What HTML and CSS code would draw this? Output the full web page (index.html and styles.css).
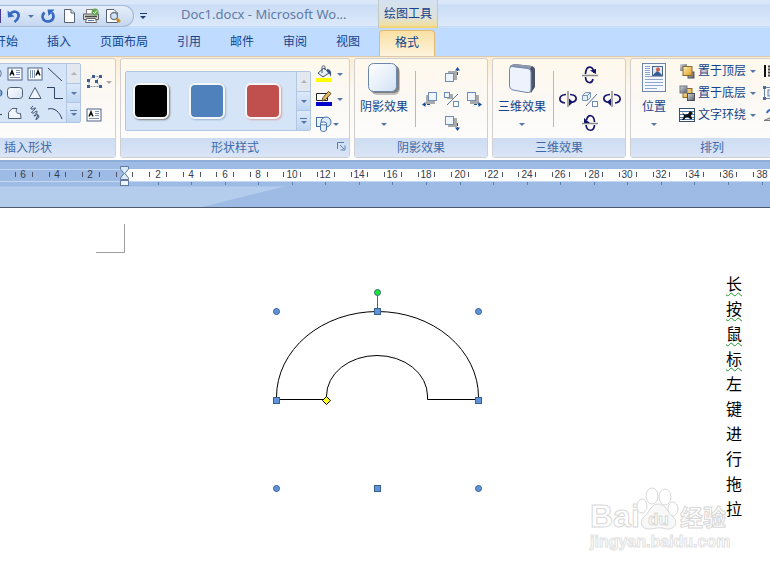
FILE: index.html
```html
<!DOCTYPE html>
<html lang="zh-CN">
<head>
    <meta charset="UTF-8">
    <meta name="viewport" content="width=device-width, initial-scale=1.0">
    <title>Doc1.docx - Microsoft Word</title>
    <link rel="stylesheet" href="styles.css">
</head>
<body>
    <!-- Shared icons -->
    <svg class="defs" width="0" height="0" aria-hidden="true">
        <defs>
            <linearGradient id="paper" x1="0" y1="0" x2="1" y2="1">
                <stop offset="0" stop-color="#ffffff"/>
                <stop offset="1" stop-color="#d3e2f6"/>
            </linearGradient>
            <linearGradient id="gold" x1="0" y1="0" x2="1" y2="1">
                <stop offset="0" stop-color="#fff0b8"/>
                <stop offset="1" stop-color="#dd9b1e"/>
            </linearGradient>
            <linearGradient id="steel" x1="0" y1="0" x2="1" y2="1">
                <stop offset="0" stop-color="#d8dbe2"/>
                <stop offset="1" stop-color="#52565f"/>
            </linearGradient>
            <symbol id="textbox" viewBox="0 0 16 14">
                <rect x="1" y="1" width="14" height="12" fill="#fff" stroke="#4d6488"/>
                <path d="M3 8.500L5 3.500L7 8.500M4 6.500H6" fill="none" stroke="#111" stroke-width="1.300"/>
                <path d="M9 3.500H13M9 5.500H13M9 7.500H13M3 10.500H13" stroke="#7f93b5"/>
            </symbol>
            <symbol id="rotate" viewBox="0 0 18 18">
                <path d="M9 1V17" stroke="#8b8b8b" stroke-width="1.500"/>
                <path d="M7 4.500C-1 5 -1 12 6 13M11 4.500C19 5 19 11.500 12 12.500" fill="none" stroke="#15156b" stroke-width="1.700"/>
                <path d="M10 8.500L14 12L10 16Z" fill="#15156b"/>
            </symbol>
        </defs>
    </svg>

    <header>
        <div class="title-bar">
            <div class="quick-access">
                <button class="save" aria-label="保存"></button>
                <button aria-label="撤消"><svg width="16" height="16" viewBox="0 0 16 16"><path d="M4 6C8 1.500 13.500 4 12.500 8.500C12 11 10.500 12.500 8.500 14" fill="none" stroke="#3568c0" stroke-width="2.600"/><path d="M1.500 2.500L2 9.500L8.500 8.500Z" fill="#3568c0"/></svg></button>
                <button class="drop" aria-label="撤消列表"><i class="arrow"></i></button>
                <button aria-label="重复"><svg width="16" height="16" viewBox="0 0 16 16"><path d="M4.500 4.500C0.500 8.500 3 13.500 8 13.500C13.500 13.500 15 8 12 4.500" fill="none" stroke="#3568c0" stroke-width="2.500"/><path d="M7.500 1.500H14.500L8.500 8Z" fill="#3568c0"/></svg></button>
                <button aria-label="新建"><svg width="16" height="16" viewBox="0 0 16 16"><path d="M3.500 1.500H10L13.500 5V14.500H3.500Z" fill="#fff" stroke="#566278"/><path d="M10 1.500V5H13.500" fill="#dde4ee" stroke="#566278"/></svg></button>
                <button aria-label="快速打印"><svg width="18" height="16" viewBox="0 0 18 16"><path d="M4.500 6V1.500H12V6" fill="#fff" stroke="#777"/><path d="M1.500 6H16.500V11.500H1.500Z" fill="#d5d5d0" stroke="#5c5c5c"/><path d="M3 8.500H15" stroke="#444" stroke-width="1.500"/><path d="M4.500 10.500H13.500L14.500 14.500H3.500Z" fill="#fff" stroke="#666"/><path d="M6 12.500H12" stroke="#4b79c0"/><circle cx="13" cy="4" r="3.500" fill="#63a653"/><path d="M11 4L12.500 5.500L15 2.500" fill="none" stroke="#fff"/></svg></button>
                <button aria-label="打印预览"><svg width="16" height="16" viewBox="0 0 16 16"><path d="M1.500 1.500H9L12.500 5V14.500H1.500Z" fill="#fff" stroke="#566278"/><circle cx="9" cy="8" r="3.500" fill="#cfe4f8" stroke="#6e7887" stroke-width="1.300"/><path d="M11.500 10.500L15 14" stroke="#c99227" stroke-width="2.600"/></svg></button>
            </div>
            <button class="customize" aria-label="自定义快速访问工具栏"><i class="bar"></i><i class="arrow"></i></button>
            <h1>Doc1.docx - Microsoft Wo...</h1>
            <div class="context-title">绘图工具</div>
        </div>
        <nav>
            <a href="#">开始</a>
            <a href="#">插入</a>
            <a href="#">页面布局</a>
            <a href="#">引用</a>
            <a href="#">邮件</a>
            <a href="#">审阅</a>
            <a href="#">视图</a>
            <a href="#" class="active">格式</a>
        </nav>
    </header>

    <main>
        <div class="ribbon">
            <!-- Insert shapes -->
            <section class="group shapes">
                <div class="group-body">
                    <div class="gallery">
                        <div class="shape-grid">
                            <button aria-label="最近使用"><svg width="16" height="16" viewBox="0 0 16 16"><path d="M8 2C16 2 16 13 8 13" fill="#fff" stroke="#3d5a80"/></svg></button>
                            <button aria-label="文本框"><svg width="16" height="14"><use href="#textbox"/></svg></button>
                            <button aria-label="竖排文本框"><svg width="16" height="14" viewBox="0 0 16 14"><rect x="1" y="1" width="14" height="12" fill="#fff" stroke="#4d6488"/><path d="M3.500 3V11M5.500 3V11M7.500 3V11" stroke="#7f93b5"/><path d="M9 8.500L11 3.500L13 8.500M10 6.500H12" fill="none" stroke="#111" stroke-width="1.300"/></svg></button>
                            <button aria-label="直线"><svg width="16" height="16" viewBox="0 0 16 16"><path d="M1 2L15 15" stroke="#2c4262"/></svg></button>
                            <button aria-label="椭圆"><svg width="16" height="16" viewBox="0 0 16 16"><ellipse cx="8" cy="8" rx="7" ry="5" fill="#82a8d8" stroke="#2c5590"/></svg></button>
                            <button aria-label="圆角矩形"><svg width="16" height="16" viewBox="0 0 16 16"><rect x="0.500" y="2.500" width="15" height="11" rx="3" fill="url(#paper)" stroke="#4c5c70"/></svg></button>
                            <button aria-label="三角形"><svg width="16" height="16" viewBox="0 0 16 16"><path d="M8 2.500L14 13.500H2Z" fill="#eff5fc" stroke="#4c5c70"/></svg></button>
                            <button aria-label="肘形连接符"><svg width="16" height="16" viewBox="0 0 16 16"><path d="M0 2.500H7.500V13.500H16" fill="none" stroke="#2c4262"/></svg></button>
                            <button aria-label="箭头"><svg width="16" height="16" viewBox="0 0 16 16"><path d="M1 9.500H15" stroke="#2c4262"/></svg></button>
                            <button aria-label="任意多边形"><svg width="16" height="16" viewBox="0 0 16 16"><path d="M1.500 13.500V7.500L5 3.500H10C8 7 10 9 13.500 8.500L14 13.500Z" fill="#eff5fc" stroke="#4c5c70"/></svg></button>
                            <button aria-label="自由曲线"><svg width="16" height="16" viewBox="0 0 16 16"><path d="M6 1C2 4 4 5 8 3C11 3 3 7 5 8C7 9 10 4 10 7C10 9 5 11 8 11C11 8 12 9 9 14C8 16 14 12 11 10" fill="none" stroke="#2c4262"/></svg></button>
                            <button aria-label="弧线"><svg width="16" height="16" viewBox="0 0 16 16"><path d="M1 4C8 2 13 8 15 14" fill="none" stroke="#2c4262"/></svg></button>
                        </div>
                        <div class="scroller">
                            <button disabled aria-label="上一行"><i class="arrow up"></i></button>
                            <button aria-label="下一行"><i class="arrow"></i></button>
                            <button aria-label="其他"><i class="bar"></i><i class="arrow"></i></button>
                        </div>
                    </div>
                    <div class="shape-tools">
                        <button aria-label="编辑形状"><svg width="18" height="16" viewBox="0 0 18 16"><path d="M3 12.500V6.500L7 2.500H14L10 7L14 12.500Z" fill="none" stroke="#8096b8" stroke-dasharray="2 1"/><path d="M1 5h3v3h-3zM1 11h3v3h-3zM6 1h3v3h-3zM13 1h3v3h-3zM9 6h3v3h-3zM13 11h3v3h-3z" fill="#3f5f91"/></svg><i class="arrow grey"></i></button>
                        <button aria-label="编辑文字"><svg width="16" height="14"><use href="#textbox"/></svg></button>
                    </div>
                </div>
                <h2>插入形状</h2>
            </section>

            <!-- Shape styles -->
            <section class="group styles">
                <div class="group-body">
                    <div class="gallery">
                        <div class="swatches">
                            <button class="swatch black" aria-label="黑色"></button>
                            <button class="swatch blue" aria-label="蓝色"></button>
                            <button class="swatch red" aria-label="红色"></button>
                        </div>
                        <div class="scroller">
                            <button disabled aria-label="上一行"><i class="arrow up"></i></button>
                            <button aria-label="下一行"><i class="arrow"></i></button>
                            <button aria-label="其他"><i class="bar"></i><i class="arrow"></i></button>
                        </div>
                    </div>
                    <div class="style-tools">
                        <button aria-label="形状填充"><svg width="18" height="18" viewBox="0 0 18 18"><path d="M3 8L9 3L14 8L8 12Z" fill="url(#paper)" stroke="#3f526e"/><path d="M7 8V2.500C7 0 10 0 10 2.500V5" fill="none" stroke="#3f526e"/><path d="M12 4C16 4 17 8 15.500 12C15 9 14 8 12 7Z" fill="#33547f"/><rect x="1" y="13" width="16" height="4" fill="#ffff00"/></svg><i class="arrow"></i></button>
                        <button aria-label="形状轮廓"><svg width="18" height="18" viewBox="0 0 18 18"><path d="M1.500 3.500H12.500V10.500H1.500Z" fill="#fff" stroke="#222"/><path d="M7 11L8 7.500L13.500 1.500L16 3.500L10.500 9.500Z" fill="#e5bc69" stroke="#60451c"/><rect x="1" y="12" width="16" height="4" fill="#0000c8"/></svg><i class="arrow"></i></button>
                        <button aria-label="更改形状"><svg width="17" height="18" viewBox="0 0 17 18"><rect x="1.500" y="2.500" width="8" height="9" fill="url(#paper)" stroke="#4270ac"/><circle cx="11" cy="7" r="5" fill="#dbe9fa" stroke="#4270ac"/><path d="M5.500 8.500H11.500V15C10.500 17 6.500 17 5.500 15Z" fill="url(#paper)" stroke="#4270ac"/><ellipse cx="8.500" cy="8.500" rx="3" ry="1.500" fill="#fff" stroke="#4270ac"/></svg><i class="arrow"></i></button>
                    </div>
                </div>
                <h2>形状样式</h2>
                <button class="launcher" aria-label="设置形状格式"><svg width="9" height="9" viewBox="0 0 9 9"><path d="M0.500 7V0.500H7M3 3L7 7M8 3.500V8H3.500" fill="none" stroke="#5d7fae"/></svg></button>
            </section>

            <!-- Shadow effects -->
            <section class="group effects">
                <div class="group-body">
                    <button class="big">
                        <svg width="34" height="34" viewBox="0 0 34 34"><rect x="4" y="4" width="29" height="29" rx="6" fill="#777" opacity="0.450"/><rect x="3" y="3" width="29" height="28" rx="5" fill="#555" opacity="0.600"/><rect x="1.500" y="1.500" width="28" height="28" rx="5" fill="url(#paper)" stroke="#6b87ac"/></svg>
                        <span>阴影效果</span><i class="arrow"></i>
                    </button>
                    <div class="nudge">
                        <button class="n" aria-label="上移阴影"><svg width="18" height="18" viewBox="0 0 18 18"><rect x="5" y="5" width="9" height="9" fill="#aaa"/><rect x="2.500" y="7.500" width="8" height="8" fill="#eef5ff" stroke="#6d8db8"/><path d="M14.500 9V3" stroke="#174fa0" stroke-dasharray="3 1"/><path d="M12 4.500H17L14.500 1Z" fill="#174fa0"/></svg></button>
                        <button class="w" aria-label="左移阴影"><svg width="18" height="18" viewBox="0 0 18 18"><rect x="5" y="5" width="9" height="9" fill="#aaa"/><rect x="7.500" y="2.500" width="8" height="8" fill="#eef5ff" stroke="#6d8db8"/><path d="M9 14.500H3" stroke="#174fa0" stroke-dasharray="3 1"/><path d="M4.500 12V17L1 14.500Z" fill="#174fa0"/></svg></button>
                        <button class="c" aria-label="设置阴影"><svg width="18" height="18" viewBox="0 0 18 18"><rect x="4" y="4" width="6" height="5" fill="#aaa"/><rect x="1.500" y="2.500" width="5" height="5" fill="#eef5ff" stroke="#6d8db8"/><path d="M15 4L4 15" stroke="#55779d"/><rect x="10.500" y="11.500" width="5" height="5" fill="#fff" stroke="#6d8db8"/></svg></button>
                        <button class="e" aria-label="右移阴影"><svg width="18" height="18" viewBox="0 0 18 18"><rect x="5" y="5" width="9" height="9" fill="#aaa"/><rect x="2.500" y="2.500" width="8" height="8" fill="#eef5ff" stroke="#6d8db8"/><path d="M9 14.500H15" stroke="#174fa0" stroke-dasharray="3 1"/><path d="M13.500 12V17L17 14.500Z" fill="#174fa0"/></svg></button>
                        <button class="s" aria-label="下移阴影"><svg width="18" height="18" viewBox="0 0 18 18"><rect x="5" y="4" width="9" height="9" fill="#aaa"/><rect x="2.500" y="2.500" width="8" height="8" fill="#eef5ff" stroke="#6d8db8"/><path d="M14.500 9V15" stroke="#174fa0" stroke-dasharray="3 1"/><path d="M12 13.500H17L14.500 17Z" fill="#174fa0"/></svg></button>
                    </div>
                </div>
                <h2>阴影效果</h2>
            </section>

            <!-- 3-D effects -->
            <section class="group effects">
                <div class="group-body">
                    <button class="big">
                        <svg width="34" height="34" viewBox="0 0 34 34"><path d="M5 4L9 2L27 4Q30 5 30 8V25L26 31Z" fill="#4b5468"/><path d="M5 4L9 2L27 4L25 7Z" fill="#8d98ad"/><path d="M7 4.500L23 6.500Q26 7 26 10V27Q26 31 22 30.500L8 28Q4.500 27 4.500 24V7.500Q4.500 4 7 4.500Z" fill="#edf2fd" stroke="#7186ab"/></svg>
                        <span>三维效果</span><i class="arrow"></i>
                    </button>
                    <div class="nudge">
                        <button class="n" aria-label="上翘"><svg width="18" height="18" viewBox="0 0 18 18"><path d="M1 9.500H17" stroke="#8b8b8b" stroke-width="1.500"/><path d="M13 7C12 -1 5 -1 4.500 8M4.500 11C5 18 11 18 12 13" fill="none" stroke="#15156b" stroke-width="1.700"/><path d="M9 4.500L15 3V8Z" fill="#15156b"/></svg></button>
                        <button class="w" aria-label="左偏"><svg width="18" height="18"><use href="#rotate"/></svg></button>
                        <button class="c" aria-label="三维开关"><svg width="18" height="18" viewBox="0 0 18 18"><path d="M1.500 5.500L4.500 2.500H9.500V7.500L6.500 10.500H1.500ZM1.500 5.500H6.500V10.500M6.500 5.500L9.500 2.500" fill="#e3effb" stroke="#7896bc"/><path d="M16 4L5 16" stroke="#55779d"/><rect x="11.500" y="11.500" width="5" height="5" fill="#fff" stroke="#6d8db8"/></svg></button>
                        <button class="e" aria-label="右偏"><svg width="18" height="18" viewBox="0 0 18 18"><g transform="matrix(-1 0 0 1 18 0)"><use href="#rotate"/></g></svg></button>
                        <button class="s" aria-label="下俯"><svg width="18" height="18" viewBox="0 0 18 18"><path d="M1 9.500H17" stroke="#8b8b8b" stroke-width="1.500"/><path d="M13.500 8C13 0 7 0 5.500 6M5 11C6 18 13 18 13.500 11" fill="none" stroke="#15156b" stroke-width="1.700"/><path d="M3 4V9H9Z" fill="#15156b"/></svg></button>
                    </div>
                </div>
                <h2>三维效果</h2>
            </section>

            <!-- Arrange -->
            <section class="group arrange">
                <div class="group-body">
                    <button class="big">
                        <svg width="34" height="34" viewBox="0 0 34 34"><rect x="5.500" y="1.500" width="23" height="28" fill="#f5f9ff" stroke="#7086a8"/><path d="M8 4.500H13M8 6.500H13M8 8.500H13M8 10.500H13M8 12.500H13M8 14.500H26M8 17.500H26M8 20.500H26M8 23.500H26M8 26.500H20" stroke="#8ea6cb"/><rect x="15.500" y="4.500" width="10" height="9" fill="#dce8fb" stroke="#48658f"/><path d="M16 13L20 9L22 10L25 13Z" fill="#375b91"/><circle cx="21" cy="7.500" r="2" fill="#d05a3b"/></svg>
                        <span>位置</span><i class="arrow"></i>
                    </button>
                    <div class="rows">
                        <button><svg width="16" height="16" viewBox="0 0 16 16"><rect x="1" y="1" width="7" height="7" fill="url(#steel)"/><rect x="9" y="9" width="6" height="6" fill="url(#steel)" stroke="#4e525a"/><rect x="4" y="3.500" width="9" height="9" fill="url(#gold)" stroke="#876a2c"/></svg>置于顶层<i class="arrow"></i></button>
                        <button><svg width="16" height="16" viewBox="0 0 16 16"><rect x="4" y="3.500" width="9" height="9" fill="url(#gold)" stroke="#876a2c"/><rect x="1" y="1" width="7" height="7" fill="url(#steel)" stroke="#747982"/><rect x="8.500" y="8.500" width="7" height="7" fill="url(#steel)" stroke="#4e525a"/></svg>置于底层<i class="arrow"></i></button>
                        <button><svg width="16" height="16" viewBox="0 0 16 16"><rect x="0.500" y="1.500" width="15" height="13" fill="#fff" stroke="#35516f"/><path d="M1 4.500H15M1 7.500H15M1 10.500H15M1 12.500H15" stroke="#4e76aa"/><path d="M3 5L6 8L9 7L11 4L14 6L12 8L13 12H11L9 10L7 10L5 13H3L5 9Z" fill="#111"/></svg>文字环绕<i class="arrow"></i></button>
                    </div>
                    <div class="rows extra">
                        <button aria-label="对齐"><svg width="16" height="16" viewBox="0 0 16 16"><path d="M2 2V14" stroke="#111" stroke-width="2"/><path d="M5 3.500H12M5 6.500H9M5 9.500H13M5 12.500H10" stroke="#444" stroke-width="2"/></svg></button>
                        <button aria-label="组合"><svg width="16" height="16" viewBox="0 0 16 16"><rect x="1.500" y="2.500" width="12" height="11" fill="none" stroke="#6683ad"/><rect x="5" y="5" width="7" height="6" fill="#dce8f8" stroke="#6683ad"/><path d="M0 1h3v3h-3zM0 12h3v3h-3z" fill="#526d93"/></svg></button>
                        <button aria-label="旋转"><svg width="16" height="16" viewBox="0 0 16 16"><path d="M1 13.500L13 8V13.500Z" fill="#ccc" stroke="#777"/><path d="M4 6C5 2 10 2 11 5" fill="none" stroke="#3568c0" stroke-width="2"/></svg></button>
                    </div>
                </div>
                <h2>排列</h2>
            </section>
        </div>

        <div class="ruler-area">
            <svg id="ruler" class="ruler" width="100%" height="24">
                <rect x="124" y="5" width="100%" height="12" fill="#fff"/>
                <path d="M0 5.500H124M0 17.500H3000" stroke="#c5d9f3"/>
                <g id="marks"></g>
                <path d="M120.500 2.500H128.500V5L125 9.500L128.500 14V15.500H120.500V14L124 9.500L120.500 5Z" fill="#dceafa" stroke="#5f7a9c"/>
                <rect x="120.500" y="16.500" width="8" height="5" fill="#eef5fd" stroke="#5f7a9c"/>
            </svg>
        </div>

        <div class="page">
            <div class="crop-mark"></div>
            <svg class="drawing" width="214" height="206" viewBox="0 0 214 206">
                <path d="M6.500 114.500V112A101 85.500 0 0 1 208.500 112V114.500H157.500V111A50.500 40.500 0 0 0 56.500 111V114.500Z" fill="#fff" stroke="#000"/>
                <path d="M107.500 10V25" stroke="#3b6794"/>
                <g fill="#5f94db" stroke="#38618f">
                    <circle cx="6.500" cy="26.500" r="3"/>
                    <circle cx="208.500" cy="26.500" r="3"/>
                    <circle cx="6.500" cy="203.500" r="3"/>
                    <circle cx="208.500" cy="203.500" r="3"/>
                    <rect x="104.500" y="23.500" width="6" height="6"/>
                    <rect x="3.500" y="112.500" width="6" height="6"/>
                    <rect x="205.500" y="112.500" width="6" height="6"/>
                    <rect x="104.500" y="200.500" width="6" height="6"/>
                </g>
                <circle cx="107.500" cy="7.500" r="3" fill="#18ea2c" stroke="#38618f"/>
                <path d="M56.500 111.500L60.500 115.500L56.500 119.500L52.500 115.500Z" fill="#ffff1e" stroke="#000"/>
            </svg>
            <p class="vertical-text"><span class="squiggle">长</span><span class="squiggle">按</span><span class="squiggle">鼠</span><span class="squiggle">标</span>左键进行拖拉</p>
            <svg class="watermark" width="146" height="74" viewBox="0 0 146 74">
                <g fill="#fff" stroke="#d8d8d8">
                    <text class="brand" x="6" y="43">Bai</text>
                    <text class="brand-cn" x="96" y="42">经验</text>
                    <text class="site" x="6" y="63">jingyan.baidu.com</text>
                    <ellipse cx="58" cy="22" rx="5" ry="7"/>
                    <ellipse cx="68" cy="12" rx="6" ry="8"/>
                    <ellipse cx="81" cy="13" rx="6" ry="8"/>
                    <ellipse cx="89" cy="25" rx="5" ry="7"/>
                    <path d="M74 20C82 20 84 29 89 33C95 38 91 46 82 45C76 43 73 44 67 45C57 46 55 38 60 33C65 29 67 20 74 20Z" fill="#f8f8f8"/>
                    <text class="du" x="64" y="41">du</text>
                </g>
            </svg>
        </div>
    </main>

    <script>
        // Ruler numbers every two characters, ticks at the half positions
        const origin = 124;
        const unit = 604 / 36;
        const last = Math.floor((window.innerWidth - origin) / unit);
        let marks = '';
        for (let n = -7; n <= last; n++) {
            const x = Math.round(origin + n * unit);
            const tick = Math.round(origin + (n + 0.5) * unit);
            marks += `<rect x="${tick}" y="8" width="1" height="5" fill="#4d5566"/>`;
            if (n % 2 === 0 && n !== 0) {
                marks += `<text x="${x}" y="14">${Math.abs(n)}</text>`;
                if (n > 0) {
                    marks += `<rect x="${x}" y="18" width="1" height="3" fill="#5d7fae"/>`;
                }
            }
        }
        document.getElementById('marks').innerHTML = marks;
    </script>
</body>
</html>
```
FILE: styles.css
```css
/* Global styles */
* {
    box-sizing: border-box;
}

body {
    font-family: "Noto Sans", "Noto Sans CJK SC", sans-serif;
    font-size: 12px;
    line-height: 16px;
    margin: 0;
    min-height: 100vh;
    display: flex;
    flex-direction: column;
    color: #15428b;
    background: #fff;
    overflow: hidden;
}

h1, h2, p {
    margin: 0;
    font-weight: normal;
}

button {
    font: inherit;
    color: inherit;
    background: none;
    border: 0;
    padding: 0;
    display: flex;
    align-items: center;
    justify-content: center;
    cursor: pointer;
}

svg {
    display: block;
    flex: none;
}

.defs {
    position: absolute;
}

.arrow {
    border: 3px solid transparent;
    border-top-color: #5577a8;
    border-bottom: 0;
}

.arrow.up {
    border-top: 0;
    border-bottom: 3px solid #b0b4ba;
}

.arrow.grey {
    border-top-color: #a8a8a8;
}

.bar {
    width: 7px;
    height: 1px;
    margin-bottom: 2px;
    background: #5577a8;
}

/* Title bar */
.title-bar {
    display: flex;
    align-items: center;
    height: 28px;
    background: linear-gradient(#d9e7f9 0, #d9e7f9 4px, #cadcf5 5px, #dce9fa 26px, #b3d0f0 27px, #e3f0fd 28px);
}

.quick-access {
    display: flex;
    align-items: center;
    gap: 5px;
    height: 22px;
    margin-top: 4px;
    padding-right: 12px;
    border: 1px solid #a5b8d5;
    border-left: 0;
    border-radius: 0 11px 11px 0;
    background: linear-gradient(#e6effb, #c5d7f0);
}

.save {
    width: 1px;
    height: 14px;
    background: #4a3a94;
}

.drop {
    width: 8px;
}

.customize {
    flex-direction: column;
    width: 18px;
    height: 20px;
    margin-top: 4px;
}

.customize .bar {
    background: #1d3d6e;
}

.customize .arrow {
    border-top-color: #1d3d6e;
}

h1 {
    flex: none;
    width: 226px;
    padding-left: 29px;
    font-size: 13px;
    white-space: nowrap;
    color: #607ba6;
}

.context-title {
    width: 60px;
    height: 28px;
    line-height: 28px;
    text-align: center;
    border: solid #c2c9c4;
    border-width: 0 1px;
    background: linear-gradient(#d3e1f2, #dfe2dc 60%, #f0dfa4 90%, #f3cf66);
}

/* Ribbon tabs */
nav {
    display: flex;
    gap: 29px;
    height: 28px;
    margin-left: -6px;
    line-height: 28px;
}

header {
    background: #bfdbff;
}

nav a {
    color: #15428b;
    text-decoration: none;
}

nav .active {
    margin: 2px 0 0 -10px;
    padding: 0 15px;
    line-height: 24px;
    border: 1px solid #e0b974;
    border-bottom: 0;
    border-radius: 4px 4px 0 0;
    background: linear-gradient(#fbe0a3, #fdf3dd);
}

/* Ribbon */
main {
    flex: 1;
    display: flex;
    flex-direction: column;
}

.ribbon {
    display: flex;
    gap: 4px;
    padding: 1px 0 2px;
    overflow: hidden;
    border-top: 1px solid #dcc8ac;
    background: linear-gradient(#fcecd2, #fdf9f0 30%, #fdfdfd);
}

.group {
    position: relative;
    flex: none;
    border: 1px solid #cfcfd2;
    border-radius: 3px;
    background: linear-gradient(#fff9ec, #fbf8f4 40%, #ffffff);
}

.group-body {
    display: flex;
    height: 79px;
}

.group h2 {
    height: 19px;
    line-height: 19px;
    font-size: 12px;
    text-align: center;
    color: #3e6aaa;
    background: linear-gradient(#cddcf2, #dae5f6);
}

.shapes {
    width: 176px;
    margin-left: -60px;
}

.shapes .group-body {
    padding: 4px 0 0 43px;
}

.styles {
    width: 230px;
}

.styles .group-body {
    padding-left: 4px;
}

.effects {
    width: 134px;
}

.arrange {
    width: 164px;
}

/* Galleries */
.gallery {
    display: flex;
    height: 60px;
    border: 1px solid #b0c6e2;
    border-radius: 2px;
    background: #d5e5f7;
}

.shape-grid {
    display: grid;
    grid-template-columns: repeat(4, 20px);
    grid-template-rows: 19px 20px 19px;
}

.scroller {
    display: flex;
    flex-direction: column;
    width: 14px;
    margin-left: 1px;
    border-left: 1px solid #b0c6e2;
}

.scroller button {
    flex: 1;
    flex-direction: column;
    background: linear-gradient(#dce9fa, #bfd6f2);
    border-bottom: 1px solid #b0c6e2;
}

.scroller button:last-child {
    border-bottom: 0;
}

.scroller button:disabled {
    background: #e3e7ee;
}

.shape-tools {
    display: flex;
    flex-direction: column;
    align-items: flex-start;
    gap: 18px;
    padding: 11px 0 0 5px;
}

.shape-tools button {
    gap: 2px;
}

.styles .gallery {
    margin-top: 12px;
}

.swatches {
    display: flex;
    align-items: center;
    gap: 20px;
    padding: 0 15px 0 7px;
}

.styles .scroller {
    margin-left: 0;
}

.swatch {
    width: 36px;
    height: 36px;
    border: 2px solid #f5f6f8;
    border-radius: 6px;
    box-shadow: 1px 1px 2px #777;
}

.swatch.black {
    background: #000;
}

.swatch.blue {
    background: #4f81bd;
    box-shadow: 1px 1px 2px #9ab3d5;
}

.swatch.red {
    background: #c0504d;
    box-shadow: 1px 1px 2px #d4a3aa;
}

.style-tools {
    display: flex;
    flex-direction: column;
    align-items: flex-start;
    gap: 7px;
    padding: 6px 0 0 4px;
}

.style-tools button {
    gap: 4px;
}

.style-tools button:last-child {
    gap: 1px;
}

.launcher {
    position: absolute;
    right: 3px;
    bottom: 6px;
}

/* Effect groups */
.big {
    flex-direction: column;
    justify-content: flex-start;
    width: 58px;
    padding-top: 3px;
}

.big span {
    margin: 3px 0 8px;
}

.nudge {
    display: grid;
    grid-template-columns: repeat(3, 22px);
    grid-template-rows: repeat(3, 24px);
    grid-template-areas: ". n ." "w c e" ". s .";
    margin: 4px 0 0 2px;
    padding-left: 4px;
    position: relative;
}

.nudge::before {
    content: "";
    position: absolute;
    left: 0;
    top: 8px;
    width: 1px;
    height: 56px;
    background: #a9bcd6;
}

.n { grid-area: n; }
.w { grid-area: w; }
.c { grid-area: c; }
.e { grid-area: e; }
.s { grid-area: s; }

/* Arrange group */
.arrange .big {
    width: 46px;
}

.rows {
    display: flex;
    flex-direction: column;
    gap: 6px;
    padding: 4px 0 0 2px;
}

.rows button {
    gap: 3px;
    height: 16px;
    white-space: nowrap;
}

.rows .arrow {
    margin-left: 1px;
}

.rows.extra {
    padding-left: 7px;
}

/* Ruler */
.ruler-area {
    height: 48px;
    padding-top: 2px;
    border-top: 2px solid #8eadd8;
    border-bottom: 1px solid #4d5a6c;
    background: linear-gradient(#9dbbe4 24px, transparent 25px), linear-gradient(166deg, #b5cdec 92px, #9dbbe4 93px);
    overflow: hidden;
}

.ruler text {
    font-family: "Liberation Sans", sans-serif;
    font-size: 10px;
    text-anchor: middle;
    fill: #333d4d;
}

/* Document */
.page {
    position: relative;
    flex: 1;
    background: #fff;
}

.crop-mark {
    width: 29px;
    height: 29px;
    margin: 16px 0 0 96px;
    border: solid #a0a0a0;
    border-width: 0 1px 1px 0;
}

.drawing {
    position: absolute;
    left: 270px;
    top: 77px;
    overflow: visible;
}

.vertical-text {
    position: absolute;
    right: 28px;
    top: 64px;
    width: 16px;
    font-size: 16px;
    line-height: 25px;
    color: #000;
}

.squiggle {
    text-decoration: underline wavy #1c9a2c 1px;
    text-underline-offset: 2px;
}

.watermark {
    position: absolute;
    right: 40px;
    bottom: 12px;
}

.watermark text {
    font-family: "Liberation Sans", "Noto Sans CJK SC", sans-serif;
    font-weight: bold;
}

.watermark .brand {
    font-size: 32px;
}

.watermark .brand-cn {
    font-size: 23px;
}

.watermark .du {
    font-size: 17px;
}

.watermark .site {
    font-size: 16px;
    stroke: #e2e2e2;
}
```
